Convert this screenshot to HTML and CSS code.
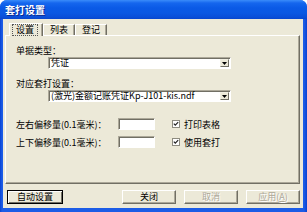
FILE: index.html
```html
<!DOCTYPE html>
<html>
<head>
<meta charset="utf-8">
<link rel="stylesheet" href="styles.css">
</head>
<body>
<div class="window">
  <div class="titlebar"><span class="title">套打设置</span></div>
  <div class="client">
    <div class="tabs">
      <div class="tab tab-active"><span class="focus">设置</span></div>
      <div class="tab">列表</div>
      <div class="tab">登记</div>
    </div>
    <div class="panel">
      <div class="label">单据类型：</div>
      <div class="combo">
        <span class="combo-text">凭证</span>
        <span class="drop"><svg width="5" height="3" viewBox="0 0 5 3"><path d="M0 0H5L2.5 3Z" fill="#000"/></svg></span>
      </div>
      <div class="label label-gap">对应套打设置：</div>
      <div class="combo">
        <span class="combo-text">(激光)金额记账凭证Kp-J101-kis.ndf</span>
        <span class="drop"><svg width="5" height="3" viewBox="0 0 5 3"><path d="M0 0H5L2.5 3Z" fill="#000"/></svg></span>
      </div>
      <div class="offsets">
        <div class="olabel">左右偏移量(0.1毫米)：</div>
        <div class="edit"></div>
        <div></div>
        <div class="check">
          <svg class="cbox" width="8" height="8" viewBox="0 0 8 8"><rect x="0.5" y="0.5" width="7" height="7" fill="#fff" stroke="#8E8C80"/><path d="M1.8 3.6L3.3 5.2L6.2 2.2" fill="none" stroke="#222" stroke-width="1.2"/></svg>
          <span>打印表格</span>
        </div>
        <div class="olabel">上下偏移量(0.1毫米)：</div>
        <div class="edit"></div>
        <div></div>
        <div class="check">
          <svg class="cbox" width="8" height="8" viewBox="0 0 8 8"><rect x="0.5" y="0.5" width="7" height="7" fill="#fff" stroke="#8E8C80"/><path d="M1.8 3.6L3.3 5.2L6.2 2.2" fill="none" stroke="#222" stroke-width="1.2"/></svg>
          <span>使用套打</span>
        </div>
      </div>
    </div>
    <div class="buttons">
      <div class="btn btn-default">自动设置</div>
      <div class="spacer"></div>
      <div class="btn">关闭</div>
      <div class="btn btn-disabled">取消</div>
      <div class="btn btn-disabled">应用(<u>A</u>)</div>
    </div>
  </div>
</div>
</body>
</html>
```
FILE: styles.css
```css
html, body {
  margin: 0;
  padding: 0;
}
body {
  width: 307px;
  height: 212px;
  overflow: hidden;
  font-family: "Noto Sans CJK SC", "Liberation Sans", sans-serif;
  font-size: 9px;
  color: #000;
  background: #fff;
}
.window {
  width: 307px;
  height: 212px;
  box-sizing: border-box;
  display: flex;
  flex-direction: column;
  background: linear-gradient(to right, #0842D2 0px, #1C5CE6 2px, #1C5CE6 calc(100% - 3px), #0842D2 100%);
  border-radius: 7px 7px 0 0;
  padding: 0 4px 4px 3px;
}
.titlebar {
  height: 19px;
  margin: 0 -4px 0 -3px;
  padding-left: 5px;
  display: flex;
  align-items: center;
  border-radius: 7px 7px 0 0;
  background: linear-gradient(to bottom, #3A8CFA 0px, #1566EE 3px, #0A5AE6 8px, #0B58E2 13px, #0A4FD8 17px, #0846CE 19px);
}
.title {
  color: #fff;
  font-weight: bold;
  font-size: 10px;
  line-height: 12px;
  text-shadow: 1px 1px #0A2A90;
}
.client {
  flex: 1;
  background: #ECE9D8;
  display: flex;
  flex-direction: column;
}
.tabs {
  display: flex;
  align-items: flex-end;
  height: 12px;
  margin: 4px 0 0 6px;
  position: relative;
  z-index: 1;
}
.tab {
  height: 10px;
  line-height: 10px;
  padding: 0 6px;
  border-top: 1px solid #fff;
  border-left: 1px solid #fff;
  border-right: 1px solid #716F64;
  box-shadow: inset -1px 0 #ACA899;
  white-space: nowrap;
}
.tab-active {
  height: 12px;
  line-height: 12px;
  padding: 0 5px 0 3px;
  margin-bottom: -1px;
  background: #ECE9D8;
}
.focus {
  display: inline-block;
  line-height: 10px;
  padding: 0 3px;
  outline: 1px dotted #555;
  outline-offset: 0;
}
.panel {
  height: 149px;
  margin: 0 3px 0 2px;
  box-sizing: border-box;
  border: 1px solid;
  border-color: #fff #716F64 #716F64 #fff;
  box-shadow: inset -1px -1px #ACA899;
  padding: 9px 0 0 10px;
  display: flex;
  flex-direction: column;
}
.label {
  height: 11px;
  line-height: 11px;
  white-space: nowrap;
}
.label-gap {
  margin-top: 9px;
}
.combo {
  width: 183px;
  height: 12px;
  margin: 1px 0 0 32px;
  box-sizing: border-box;
  background: #fff;
  border: 1px solid;
  border-color: #ACA899 #fff #fff #ACA899;
  box-shadow: inset 1px 1px #716F64;
  display: flex;
  align-items: center;
  justify-content: space-between;
}
.combo-text {
  padding-left: 2px;
  line-height: 10px;
  white-space: nowrap;
}
.drop {
  width: 9px;
  height: 8px;
  margin-right: 1px;
  box-sizing: border-box;
  background: #ECE9D8;
  border: 1px solid;
  border-color: #F1EFE2 #716F64 #716F64 #F1EFE2;
  display: flex;
  align-items: center;
  justify-content: center;
}
.offsets {
  margin-top: 16px;
  display: grid;
  grid-template-columns: 102px 37px 17px auto;
  grid-auto-rows: 12px;
  row-gap: 6px;
  align-items: center;
}
.olabel {
  white-space: nowrap;
  line-height: 11px;
}
.edit {
  height: 12px;
  box-sizing: border-box;
  background: #fff;
  border: 1px solid;
  border-color: #ACA899 #fff #fff #ACA899;
  box-shadow: inset 1px 1px #716F64;
}
.check {
  display: flex;
  align-items: center;
  gap: 4px;
  white-space: nowrap;
  line-height: 11px;
}
.cbox {
  display: block;
  flex: none;
}
.buttons {
  display: flex;
  gap: 8px;
  margin-top: 6px;
  padding: 0 3px 0 4px;
}
.spacer {
  flex: 1;
}
.btn {
  width: 54px;
  height: 14px;
  box-sizing: border-box;
  border: 1px solid;
  border-color: #fff #716F64 #716F64 #fff;
  box-shadow: inset -1px -1px #ACA899;
  display: flex;
  align-items: center;
  justify-content: center;
  line-height: 10px;
  white-space: nowrap;
}
.btn-default {
  width: 56px;
  border-color: #000;
  box-shadow: inset 1px 1px #fff, inset -1px -1px #716F64;
}
.btn-disabled {
  color: #ACA899;
  text-shadow: 1px 1px #fff;
}
```
